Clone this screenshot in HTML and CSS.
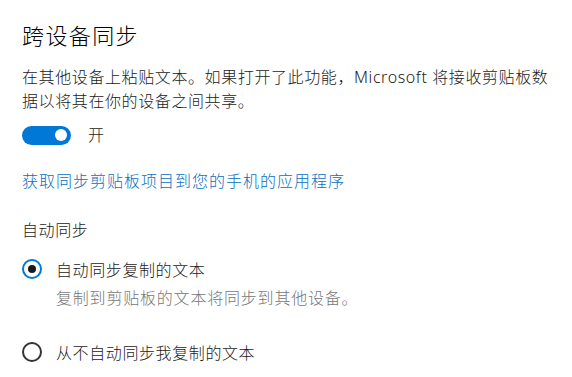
FILE: index.html
```html
<!DOCTYPE html>
<html lang="zh-CN">
<head>
  <meta charset="UTF-8">
  <title>跨设备同步</title>
  <link rel="stylesheet" href="styles.css">
</head>
<body>
  <div class="page">
    <h1 class="title">跨设备同步</h1>

    <p class="desc">在其他设备上粘贴文本。如果打开了此功能，Microsoft 将接收剪贴板数据以将其在你的设备之间共享。</p>

    <div class="toggle-row">
      <div class="toggle on"><span class="thumb"></span></div>
      <span class="toggle-label">开</span>
    </div>

    <a class="link" href="#">获取同步剪贴板项目到您的手机的应用程序</a>

    <div class="group-label">自动同步</div>

    <div class="option">
      <div class="radio checked"><span class="dot"></span></div>
      <span>自动同步复制的文本</span>
    </div>
    <div class="option-note">复制到剪贴板的文本将同步到其他设备。</div>

    <div class="option option-last">
      <div class="radio"></div>
      <span>从不自动同步我复制的文本</span>
    </div>
  </div>
</body>
</html>
```

FILE: styles.css
```css
body {
  margin: 0;
  background: #fff;
  color: #1a1a1a;
  font-family: "Noto Sans", "Noto Sans CJK SC", sans-serif;
  font-size: 16px;
  font-weight: 300;
  letter-spacing: 0.6px;
  overflow: hidden;
}

.page {
  padding: 20px 20px 0 22px;
  display: flex;
  flex-direction: column;
  align-items: flex-start;
}

.title {
  margin: 0;
  font-size: 22px;
  font-weight: 300;
  line-height: 30px;
  letter-spacing: 1.4px;
  color: #000;
}

.desc {
  margin: 15px 0 0;
  line-height: 24px;
  max-width: 535px;
}

.toggle-row {
  margin-top: 10px;
  height: 24px;
  display: flex;
  align-items: center;
}

.toggle {
  width: 49px;
  height: 19px;
  border-radius: 10px;
  background: #0078d7;
  display: flex;
  align-items: center;
  justify-content: flex-end;
  padding: 0 4px;
  box-sizing: border-box;
}

.thumb {
  width: 12px;
  height: 12px;
  border-radius: 50%;
  background: #fff;
}

.toggle-label {
  margin-left: 17px;
  line-height: 24px;
}

.link {
  margin-top: 22px;
  line-height: 24px;
  color: #0a6fc2;
  letter-spacing: 1px;
  text-decoration: none;
}

.group-label {
  margin-top: 25px;
  line-height: 24px;
}

.option {
  margin-top: 15px;
  height: 24px;
  display: flex;
  align-items: center;
  gap: 14px;
}

.radio {
  width: 20px;
  height: 20px;
  border: 2px solid #333;
  border-radius: 50%;
  box-sizing: border-box;
  display: flex;
  align-items: center;
  justify-content: center;
}

.radio.checked {
  border-color: #0078d7;
}

.dot {
  width: 8px;
  height: 8px;
  border-radius: 50%;
  background: #1a1a1a;
}

.option-note {
  margin: 5px 0 0 34px;
  line-height: 24px;
  color: #777;
  letter-spacing: 0.8px;
}

.option-last {
  margin-top: 30px;
}
```
